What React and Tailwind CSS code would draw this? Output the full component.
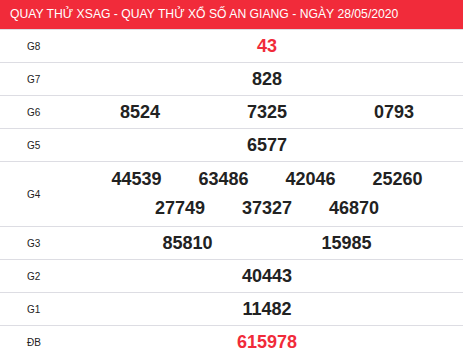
import React from 'react';

const rows = [
  { label: 'G8', nums: ['43'], w: 'w-[120px]', red: true },
  { label: 'G7', nums: ['828'], w: 'w-[120px]' },
  { label: 'G6', nums: ['8524', '7325', '0793'], w: 'w-[127px]' },
  { label: 'G5', nums: ['6577'], w: 'w-[120px]' },
  { label: 'G4', nums: ['44539', '63486', '42046', '25260', '27749', '37327', '46870'], w: 'w-[87px]', tall: true },
  { label: 'G3', nums: ['85810', '15985'], w: 'w-[159px]' },
  { label: 'G2', nums: ['40443'], w: 'w-[120px]' },
  { label: 'G1', nums: ['11482'], w: 'w-[120px]' },
  { label: 'ĐB', nums: ['615978'], w: 'w-[120px]', red: true },
];

export default function App() {
  return (
    <div className="w-[463px] h-[353px] overflow-hidden bg-white font-['Liberation_Sans',Arial,sans-serif]">
      <div className="h-[29px] bg-[#f12b3a] text-white text-[12.2px] leading-[29px] pl-[10px] whitespace-nowrap">
        QUAY THỬ XSAG - QUAY THỬ XỔ SỐ AN GIANG - NGÀY 28/05/2020
      </div>
      {rows.map((r) => (
        <div
          key={r.label}
          className={`flex items-center border-t border-[#dddde3] ${r.tall ? 'h-[65px]' : 'h-[33px]'}`}
        >
          <div className="w-[71px] shrink-0 pl-[27px] text-[10px] text-[#222]">{r.label}</div>
          <div className="flex-1 flex flex-wrap justify-center">
            {r.nums.map((n) => (
              <span
                key={n}
                className={`${r.w} text-center text-[18px] leading-[29px] font-bold ${r.red ? 'text-[#f12b3a]' : 'text-[#222]'}`}
              >
                {n}
              </span>
            ))}
          </div>
        </div>
      ))}
    </div>
  );
}
